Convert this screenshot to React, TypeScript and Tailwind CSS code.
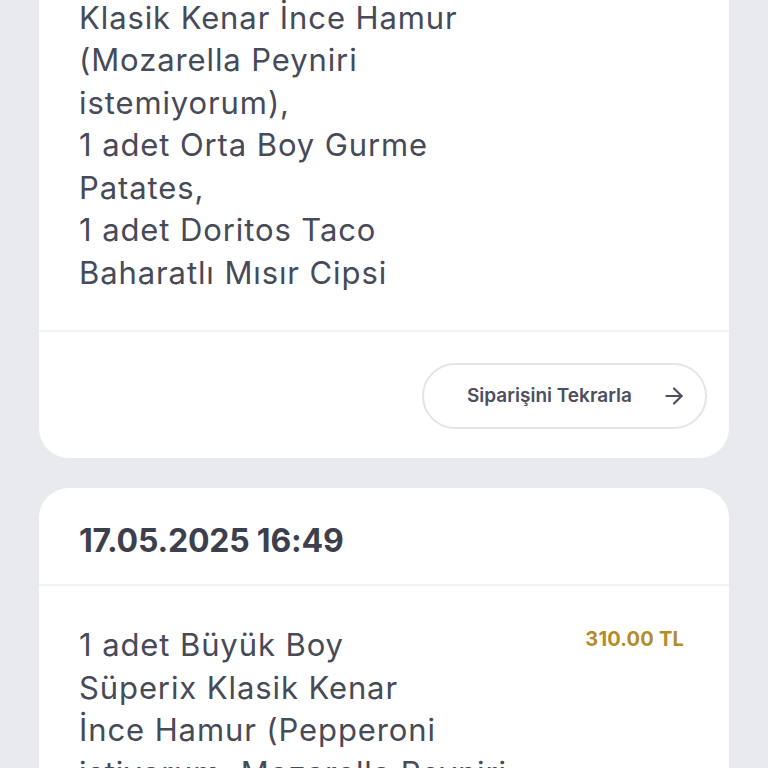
import React from "react";
import { ArrowRight } from "lucide-react";

const font = { fontFamily: "Inter, Lato, 'Noto Sans', sans-serif" };

const OrderLines: React.FC<{ lines: string[] }> = ({ lines }) => (
  <p className="text-[31px] leading-[42.5px] tracking-[0.9px] text-[#474a57]">
    {lines.map((l, i) => (
      <span key={i} className="block whitespace-nowrap">
        {l}
      </span>
    ))}
  </p>
);

export default function App() {
  return (
    <div className="min-h-screen overflow-hidden bg-[#e9eaee]" style={font}>
      <div className="-mt-[46px] flex flex-col gap-[30px] px-[39px]">
        {/* previous order, scrolled up */}
        <div className="rounded-b-[30px] bg-white">
          <div className="px-[40px] pb-[36px]">
            <OrderLines
              lines={[
                "1 adet Büyük Boy Süperix",
                "Klasik Kenar İnce Hamur",
                "(Mozarella Peyniri",
                "istemiyorum),",
                "1 adet Orta Boy Gurme",
                "Patates,",
                "1 adet Doritos Taco",
                "Baharatlı Mısır Cipsi",
              ]}
            />
          </div>
          <div className="flex h-[128px] items-center justify-end border-t-2 border-[#f1f2f5] pr-[22px] pt-[2px]">
            <button className="flex h-[66px] w-[285px] items-center justify-between rounded-full border-2 border-[#e3e4e8] pl-[43px] pr-[18px] text-[19px] font-semibold text-[#4b4f60]">
              <span>Siparişini Tekrarla</span>
              <ArrowRight className="h-[26px] w-[26px]" strokeWidth={2} />
            </button>
          </div>
        </div>

        {/* order 17.05.2025 */}
        <div className="rounded-[30px] bg-white">
          <div className="flex h-[96px] items-center px-[40px] pt-[10px]">
            <h2 className="text-[32px] font-bold tracking-[-0.2px] text-[#3d404c]">17.05.2025 16:49</h2>
          </div>
          <div className="flex justify-between border-t-2 border-[#f1f2f5] pl-[40px] pr-[45px] pt-[38px] pb-[40px]">
            <OrderLines
              lines={[
                "1 adet Büyük Boy",
                "Süperix Klasik Kenar",
                "İnce Hamur (Pepperoni",
                "istiyorum, Mozarella Peyniri",
                "istemiyorum)",
              ]}
            />
            <span className="pt-0 text-[20px] font-bold tracking-[0.2px] text-[#b48c2a]">310.00 TL</span>
          </div>
        </div>
      </div>
    </div>
  );
}
